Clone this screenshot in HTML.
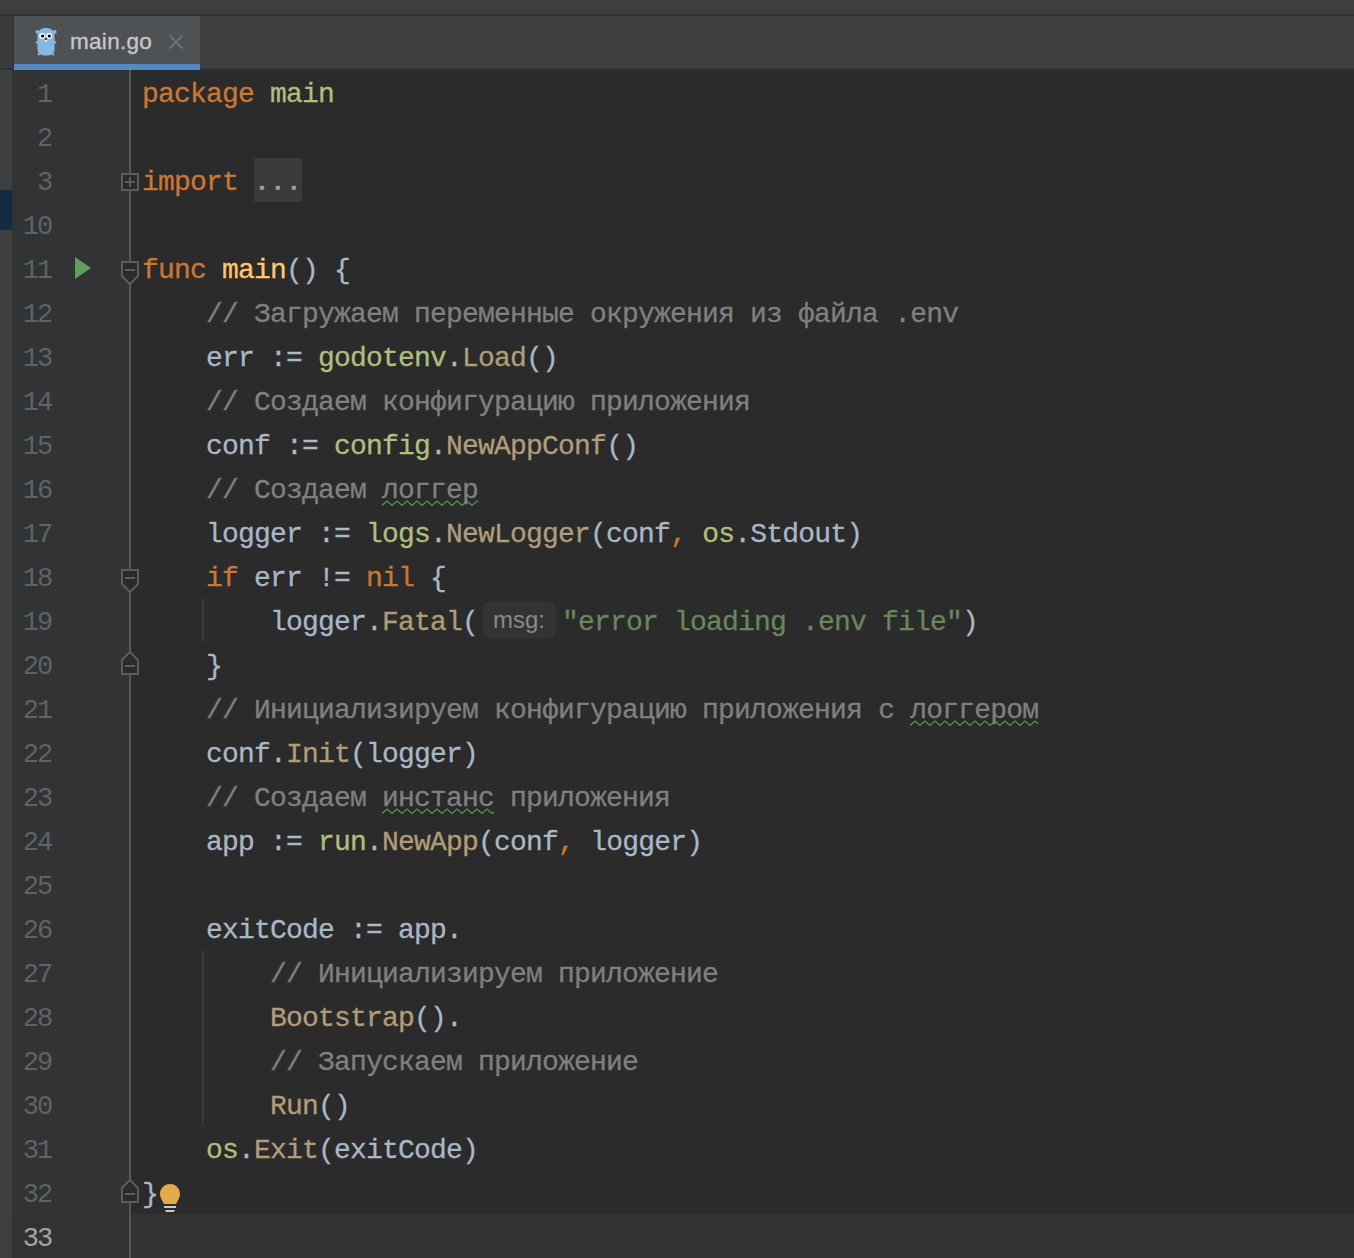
<!DOCTYPE html>
<html><head><meta charset="utf-8">
<style>
html,body{margin:0;padding:0;}
body{width:1354px;height:1258px;overflow:hidden;background:#2B2B2B;position:relative;font-family:"Liberation Mono",monospace;}
.abs{position:absolute;}
#top{left:0;top:0;width:1354px;height:14px;background:#3E3F41;}
#topline{left:0;top:14px;width:1354px;height:2px;background:#313131;}
#tabbar{left:0;top:16px;width:1354px;height:52px;background:#3E3F41;}
#tabline{left:0;top:68px;width:1354px;height:2px;background:#323232;}
#leftstrip{left:0;top:70px;width:12px;height:1188px;background:#3D3F41;}
#lefttab{left:0;top:16px;width:12px;height:52px;background:#393B3D;}
#lefttabline{left:0;top:68px;width:12px;height:2px;background:#323232;}
#lefttabsep{left:12px;top:16px;width:2px;height:54px;background:#313335;}
#bluemark{left:0;top:190px;width:12px;height:40px;background:#142A40;}
#gutleft{left:12px;top:70px;width:2px;height:1188px;background:#303131;}
#tab{left:14px;top:16px;width:186px;height:48px;background:#4E5254;}
#tabblue{left:14px;top:64px;width:186px;height:6px;background:#5787C4;}
#tabtext{left:70px;top:18px;height:48px;line-height:48px;font-family:"Liberation Sans",sans-serif;font-size:22.5px;letter-spacing:0.3px;color:#C6C6C6;-webkit-text-stroke:0.35px #C6C6C6;}
#gutter{left:12px;top:70px;width:118px;height:1188px;background:#313335;}
#gline{left:129px;top:70px;width:2px;height:1188px;background:#555758;}
#curgut{left:14px;top:1214px;width:115px;height:44px;background:#323232;}
#curline{left:131px;top:1214px;width:1223px;height:44px;background:#323232;}
.ln{position:absolute;right:1302.5px;height:44px;line-height:44px;font-size:27px;letter-spacing:-1.8px;color:#5F6366;white-space:pre;transform:translateY(3px);}
.r{position:absolute;left:142px;height:44px;line-height:44px;font-size:28px;letter-spacing:-0.8px;color:#A9B7C6;white-space:pre;transform:translateY(3px);-webkit-text-stroke:0.3px currentColor;}
.k{color:#CC7832}.p{color:#AFBF7E}.f{color:#FFC66D}.c{color:#808080}.m{color:#B09D79}.s{color:#6A8759}
.w{position:relative;}
.guide{position:absolute;width:2px;background:#393939;}
</style></head><body>
<div class="abs" id="top"></div>
<div class="abs" id="topline"></div>
<div class="abs" id="tabbar"></div>
<div class="abs" id="tabline"></div>
<div class="abs" id="leftstrip"></div>
<div class="abs" id="lefttab"></div>
<div class="abs" id="lefttabline"></div>
<div class="abs" id="lefttabsep"></div>
<div class="abs" id="tab"></div>
<div class="abs" id="tabblue"></div>
<div class="abs" id="tabtext">main.go</div>
<div class="abs" id="gutter"></div>
<div class="abs" id="bluemark"></div>
<div class="abs" id="gutleft"></div>
<div class="abs" id="curgut"></div>
<div class="abs" id="curline"></div>
<div class="abs" id="gline"></div>


<svg class="abs" style="left:0;top:0" width="1354" height="1258" viewBox="0 0 1354 1258">
 <!-- close X -->
 <path d="M169.3 35.3 L182.7 48.8 M182.7 35.3 L169.3 48.8" stroke="#6B7175" stroke-width="2" fill="none"/>
 <!-- gopher -->
 <g>
  <circle cx="37.4" cy="31.9" r="1.9" fill="#85B8E0"/>
  <circle cx="54.7" cy="31.9" r="1.9" fill="#85B8E0"/>
  <circle cx="36.9" cy="42.3" r="1.3" fill="#C4A286"/>
  <circle cx="55" cy="42.3" r="1.3" fill="#C4A286"/>
  <circle cx="39" cy="54.3" r="1.3" fill="#C4A286"/>
  <circle cx="53" cy="54.3" r="1.3" fill="#C4A286"/>
  <path d="M46 28 C51 28 54.6 30.5 54.6 36 L54.6 49 C54.6 53.5 51 55.6 46 55.6 C41 55.6 37.4 53.5 37.4 49 L37.4 36 C37.4 30.5 41 28 46 28 Z" fill="#85B8E0"/>
  <circle cx="42.1" cy="36" r="3" fill="#FFFFFF"/>
  <circle cx="49.2" cy="36" r="3" fill="#FFFFFF"/>
  <circle cx="42.6" cy="36" r="1.6" fill="#000000"/>
  <circle cx="49.3" cy="36" r="1.6" fill="#000000"/>
  <rect x="45" y="39.6" width="2" height="1.8" fill="#F0F0F0"/>
  <ellipse cx="46" cy="39.4" rx="1.8" ry="1.3" fill="#C9A88A"/>
  <rect x="45" y="39.8" width="2" height="1.8" fill="#F0F0F0"/>
  <ellipse cx="46" cy="38.8" rx="1.2" ry="0.9" fill="#1A1A1A"/>
 </g>
 <!-- run triangle -->
 <path d="M75 257 L75 279 L91 268 Z" fill="#5E9F5E"/>
 <!-- fold markers -->
 <g stroke="#5A5C5E" stroke-width="2" fill="#2B2B2B">
  <rect x="122" y="174" width="16" height="16"/>
  <path d="M122 262 H138 V276 L130 284 L122 276 Z"/>
  <path d="M122 570 H138 V584 L130 592 L122 584 Z"/>
  <path d="M122 674 H138 V660 L130 652 L122 660 Z"/>
  <path d="M122 1202 H138 V1188 L130 1180 L122 1188 Z"/>
 </g>
 <g stroke="#5A5C5E" stroke-width="2" fill="none">
  <path d="M125 182 H135 M130 177 V187"/>
  <path d="M125 270 H135"/>
  <path d="M125 578 H135"/>
  <path d="M125 666 H135"/>
  <path d="M125 1194 H135"/>
 </g>
 <!-- folded import box -->
 <rect x="254" y="158" width="48" height="44" fill="#3A3A3A"/>
 <circle cx="262" cy="187.8" r="2.4" fill="#9A9A9A"/>
 <circle cx="277.8" cy="187.8" r="2.4" fill="#9A9A9A"/>
 <circle cx="293.8" cy="187.8" r="2.4" fill="#9A9A9A"/>
 <!-- inlay hint -->
 <rect x="482" y="602" width="74" height="36" rx="6" fill="#333333"/>
 <text x="493" y="628" font-family="Liberation Sans" font-size="24" fill="#8A8A8A">msg:</text>
 <!-- indent guides -->
 <rect x="202" y="598" width="2" height="44" fill="#393939"/>
 <rect x="202" y="950" width="2" height="176" fill="#393939"/>
 <!-- waves -->
<polyline points="382.0,505.5 387.0,501.0 392.0,505.5 397.0,501.0 402.0,505.5 407.0,501.0 412.0,505.5 417.0,501.0 422.0,505.5 427.0,501.0 432.0,505.5 437.0,501.0 442.0,505.5 447.0,501.0 452.0,505.5 457.0,501.0 462.0,505.5 467.0,501.0 472.0,505.5 477.0,501.0 478.0,501.9" fill="none" stroke="#5A9456" stroke-width="1.2"/>
<polyline points="910.0,725.5 915.0,721.0 920.0,725.5 925.0,721.0 930.0,725.5 935.0,721.0 940.0,725.5 945.0,721.0 950.0,725.5 955.0,721.0 960.0,725.5 965.0,721.0 970.0,725.5 975.0,721.0 980.0,725.5 985.0,721.0 990.0,725.5 995.0,721.0 1000.0,725.5 1005.0,721.0 1010.0,725.5 1015.0,721.0 1020.0,725.5 1025.0,721.0 1030.0,725.5 1035.0,721.0 1038.0,723.7" fill="none" stroke="#5A9456" stroke-width="1.2"/>
<polyline points="382.0,813.5 387.0,809.0 392.0,813.5 397.0,809.0 402.0,813.5 407.0,809.0 412.0,813.5 417.0,809.0 422.0,813.5 427.0,809.0 432.0,813.5 437.0,809.0 442.0,813.5 447.0,809.0 452.0,813.5 457.0,809.0 462.0,813.5 467.0,809.0 472.0,813.5 477.0,809.0 482.0,813.5 487.0,809.0 492.0,813.5 494.0,811.7" fill="none" stroke="#5A9456" stroke-width="1.2"/>
 <!-- lightbulb -->
 <path d="M170 1184 C175.8 1184 180 1188.5 180 1194 C180 1197.5 178 1200 176 1204 L164 1204 C162 1200 160 1197.5 160 1194 C160 1188.5 164.2 1184 170 1184 Z" fill="#E5A84B"/>
 <rect x="164" y="1206" width="12" height="2" fill="#C9C9C9"/>
 <path d="M165 1210 H175 L174 1212 H166 Z" fill="#C9C9C9"/>
</svg>

<!-- line numbers -->
<div class="ln" style="top:70px">1</div>
<div class="ln" style="top:114px">2</div>
<div class="ln" style="top:158px">3</div>
<div class="ln" style="top:202px">10</div>
<div class="ln" style="top:246px">11</div>
<div class="ln" style="top:290px">12</div>
<div class="ln" style="top:334px">13</div>
<div class="ln" style="top:378px">14</div>
<div class="ln" style="top:422px">15</div>
<div class="ln" style="top:466px">16</div>
<div class="ln" style="top:510px">17</div>
<div class="ln" style="top:554px">18</div>
<div class="ln" style="top:598px">19</div>
<div class="ln" style="top:642px">20</div>
<div class="ln" style="top:686px">21</div>
<div class="ln" style="top:730px">22</div>
<div class="ln" style="top:774px">23</div>
<div class="ln" style="top:818px">24</div>
<div class="ln" style="top:862px">25</div>
<div class="ln" style="top:906px">26</div>
<div class="ln" style="top:950px">27</div>
<div class="ln" style="top:994px">28</div>
<div class="ln" style="top:1038px">29</div>
<div class="ln" style="top:1082px">30</div>
<div class="ln" style="top:1126px">31</div>
<div class="ln" style="top:1170px">32</div>
<div class="ln" style="top:1214px;color:#A4A3A3">33</div>

<!-- code -->
<div class="r" style="top:70px"><span class="k">package</span> <span class="p">main</span></div>
<div class="r" style="top:158px"><span class="k">import</span></div>
<div class="r" style="top:246px"><span class="k">func</span> <span class="f">main</span>() {</div>
<div class="r" style="top:290px"><span class="c">    // Загружаем переменные окружения из файла .env</span></div>
<div class="r" style="top:334px">    err := <span class="p">godotenv</span>.<span class="m">Load</span>()</div>
<div class="r" style="top:378px"><span class="c">    // Создаем конфигурацию приложения</span></div>
<div class="r" style="top:422px">    conf := <span class="p">config</span>.<span class="m">NewAppConf</span>()</div>
<div class="r" style="top:466px"><span class="c">    // Создаем логгер</span></div>
<div class="r" style="top:510px">    logger := <span class="p">logs</span>.<span class="m">NewLogger</span>(conf<span class="k">,</span> <span class="p">os</span>.Stdout)</div>
<div class="r" style="top:554px">    <span class="k">if</span> err != <span class="k">nil</span> {</div>
<div class="r" style="top:598px">        logger.<span class="m">Fatal</span>(</div>
<div class="r" style="top:598px;left:562px"><span class="s">"error loading .env file"</span>)</div>
<div class="r" style="top:642px">    }</div>
<div class="r" style="top:686px"><span class="c">    // Инициализируем конфигурацию приложения с логгером</span></div>
<div class="r" style="top:730px">    conf.<span class="m">Init</span>(logger)</div>
<div class="r" style="top:774px"><span class="c">    // Создаем инстанс приложения</span></div>
<div class="r" style="top:818px">    app := <span class="p">run</span>.<span class="m">NewApp</span>(conf<span class="k">,</span> logger)</div>
<div class="r" style="top:906px">    exitCode := app.</div>
<div class="r" style="top:950px"><span class="c">        // Инициализируем приложение</span></div>
<div class="r" style="top:994px">        <span class="m">Bootstrap</span>().</div>
<div class="r" style="top:1038px"><span class="c">        // Запускаем приложение</span></div>
<div class="r" style="top:1082px">        <span class="m">Run</span>()</div>
<div class="r" style="top:1126px">    <span class="p">os</span>.<span class="m">Exit</span>(exitCode)</div>
<div class="r" style="top:1170px">}</div>

</body></html>
